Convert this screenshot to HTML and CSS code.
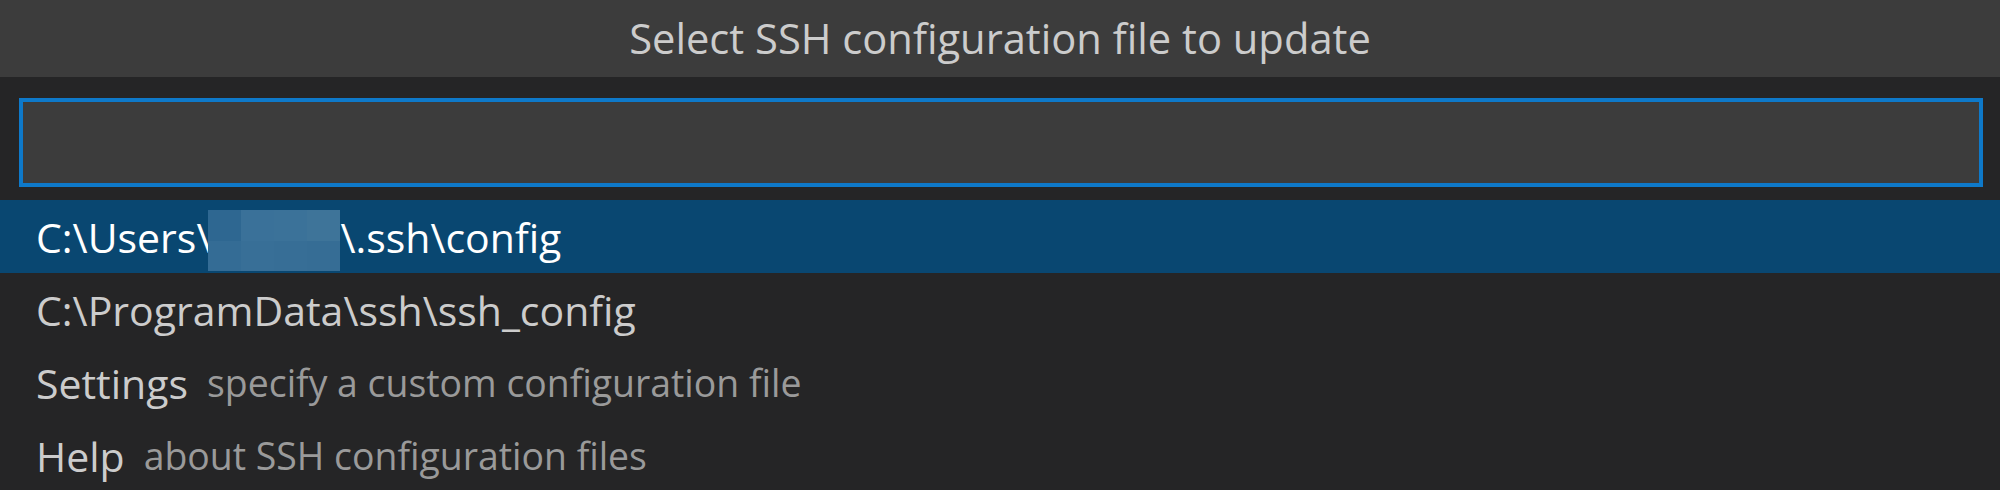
FILE: index.html
```html
<!DOCTYPE html>
<html lang="en">
<head>
<meta charset="utf-8">
<title>Select SSH configuration file to update</title>
<link rel="stylesheet" href="styles.css">
</head>
<body>
<div class="quick-input">
  <div class="title">Select SSH configuration file to update</div>
  <div class="input-row">
    <div class="input-box"></div>
  </div>
  <div class="list">
    <div class="row selected">
      <span class="label">C:\Users\</span><span class="redacted"><i class="c1"></i><i class="c2"></i><i class="c3"></i><i class="c4"></i><i class="c5"></i><i class="c6"></i><i class="c7"></i><i class="c8"></i></span><span class="label">\.ssh\config</span>
    </div>
    <div class="row">
      <span class="label">C:\ProgramData\ssh\ssh_config</span>
    </div>
    <div class="row">
      <span class="label">Settings</span><span class="desc">specify a custom configuration file</span>
    </div>
    <div class="row">
      <span class="label">Help</span><span class="desc">about SSH configuration files</span>
    </div>
  </div>
</div>
</body>
</html>
```

FILE: styles.css
```css
html, body {
  margin: 0;
  padding: 0;
  background: #252526;
}
body {
  width: 2000px;
  height: 490px;
  overflow: hidden;
  font-family: "Open Sans", "Noto Sans", sans-serif;
}
.quick-input {
  display: flex;
  flex-direction: column;
  background: #252526;
  color: #cccccc;
}
.title {
  height: 77px;
  background: #3c3c3c;
  display: flex;
  align-items: center;
  justify-content: center;
  font-size: 41.7px;
  color: #cccccc;
  padding-bottom: 2px;
  box-sizing: border-box;
}
.input-row {
  padding: 21px 17px 13px 19px;
}
.input-box {
  height: 89px;
  box-sizing: border-box;
  border: 4px solid #0e79c9;
  background: #3c3c3c;
}
.list {
  display: flex;
  flex-direction: column;
}
.row {
  height: 73px;
  display: flex;
  align-items: center;
  padding-left: 36px;
  font-size: 41px;
  white-space: nowrap;
  color: #cccccc;
}
.row.selected {
  background: #094771;
  color: #ffffff;
}
.desc {
  margin-left: 19px;
  font-size: 37.4px;
  color: #9a9a9a;
}
.redacted {
  display: grid;
  grid-template-columns: repeat(4, 33px);
  grid-template-rows: 31px 30px;
  margin: 8px 0 0 -3px;
}
.redacted i { display: block; }
.c1 { background: #2e6791; }
.c2 { background: #3a7199; }
.c3 { background: #3b7299; }
.c4 { background: #3e7499; }
.c5 { background: #346c95; }
.c6 { background: #386f97; }
.c7 { background: #376e96; }
.c8 { background: #366d95; }
```
